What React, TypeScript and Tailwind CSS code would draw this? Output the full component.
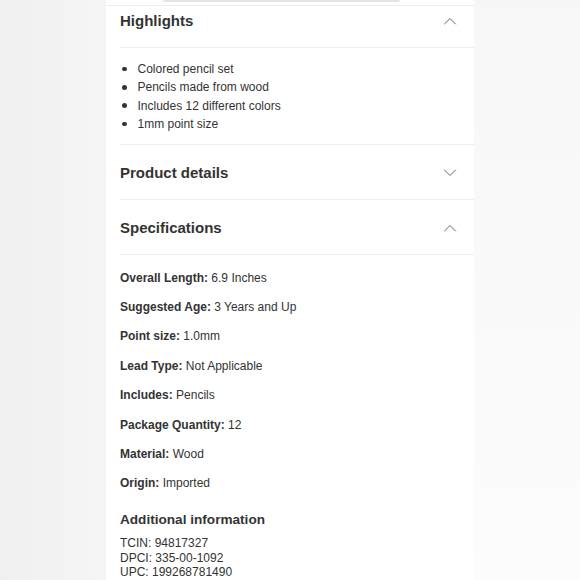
const HIGHLIGHTS = [
  'Colored pencil set',
  'Pencils made from wood',
  'Includes 12 different colors',
  '1mm point size',
];

const SPECS = [
  { label: 'Overall Length:', value: '6.9 Inches' },
  { label: 'Suggested Age:', value: '3 Years and Up' },
  { label: 'Point size:', value: '1.0mm' },
  { label: 'Lead Type:', value: 'Not Applicable' },
  { label: 'Includes:', value: 'Pencils' },
  { label: 'Package Quantity:', value: '12' },
  { label: 'Material:', value: 'Wood' },
  { label: 'Origin:', value: 'Imported' },
];

function Chevron({ open }: { open: boolean }) {
  return (
    <svg width="14" height="8" viewBox="0 0 14 8" fill="none" className="text-[#666]">
      <polyline
        points={open ? '1.5,7 7,1.5 12.5,7' : '1.5,1 7,6.5 12.5,1'}
        stroke="currentColor"
        strokeWidth="1"
        strokeLinecap="round"
        strokeLinejoin="round"
      />
    </svg>
  );
}

function SectionHeader({ title, open, className }: { title: string; open: boolean; className: string }) {
  return (
    <div className={`flex justify-between pl-[14px] pr-[17px] ${className}`}>
      <h3 className="text-[15px] leading-[18px] font-bold text-[#333]">{title}</h3>
      <Chevron open={open} />
    </div>
  );
}

export default function App() {
  return (
    <div className="flex w-[580px] h-[580px] overflow-hidden bg-[#fafafa]" style={{ fontFamily: '"Liberation Sans", Arial, sans-serif' }}>
      <div className="w-[106px] shrink-0 bg-gradient-to-r from-[#f0f0f0] to-[#f5f5f5]" />

      <div className="w-[368px] shrink-0 bg-white flex flex-col">
        <div className="h-[5px]">
          <div className="ml-[57px] w-[237px] h-[2px] rounded-b-full bg-[#e4e4e4]" />
        </div>
        <div className="h-px bg-[#ececec]" />

        <div className="flex justify-between pl-[14px] pr-[17px] h-[41px] pt-[6px]">
          <h3 className="text-[15px] leading-[18px] font-bold text-[#333]">Highlights</h3>
          <div className="pt-[5px]">
            <Chevron open />
          </div>
        </div>
        <div className="ml-[14px] h-px bg-[#eeeeee]" />

        <ul className="pt-[12px] pb-[11px]">
          {HIGHLIGHTS.map((h) => (
            <li key={h} className="flex items-center h-[18.3px] text-[12px] text-[#333]">
              <span className="ml-[16px] w-[4.5px] h-[4.5px] rounded-full bg-[#333]" />
              <span className="ml-[11px]">{h}</span>
            </li>
          ))}
        </ul>
        <div className="ml-[14px] h-px bg-[#eeeeee]" />

        <SectionHeader title="Product details" open={false} className="h-[54px] items-center pt-[2px]" />
        <div className="ml-[14px] h-px bg-[#eeeeee]" />

        <SectionHeader title="Specifications" open className="h-[54px] items-center pt-[2px]" />
        <div className="ml-[14px] h-px bg-[#eeeeee]" />

        <div className="pl-[14px] pt-[15.5px] flex flex-col gap-[15.4px]">
          {SPECS.map((s) => (
            <p key={s.label} className="text-[12px] leading-[14px] text-[#333]">
              <span className="font-bold">{s.label}</span> {s.value}
            </p>
          ))}
        </div>

        <div className="pl-[14px] mt-[22px]">
          <h4 className="text-[13.6px] leading-[16px] font-bold text-[#333]">Additional information</h4>
          <div className="mt-[8px] text-[12px] leading-[14.5px] text-[#333]">
            <p>TCIN: 94817327</p>
            <p>DPCI: 335-00-1092</p>
            <p>UPC: 199268781490</p>
          </div>
        </div>
      </div>

      <div className="flex-1 bg-gradient-to-b from-[#f7f7f7] to-[#fcfcfc]" />
    </div>
  );
}
